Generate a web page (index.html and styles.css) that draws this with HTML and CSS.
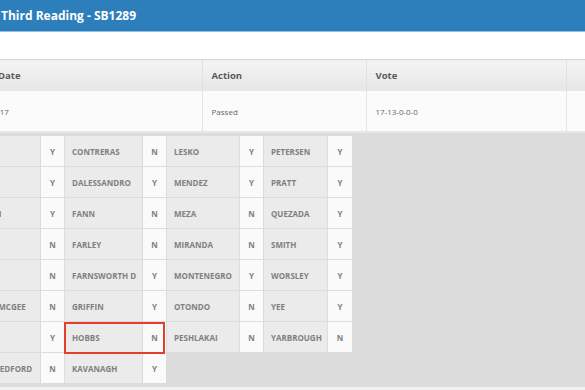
FILE: index.html
```html
<!DOCTYPE html>
<html lang="en">

<head>
    <meta charset="UTF-8">
    <meta name="viewport" content="width=device-width, initial-scale=1.0">
    <title>SB1289 - Third Reading</title>
    <link rel="stylesheet" href="styles.css">
</head>

<body>
    <div class="page">
        <div class="title-bar">
            <h2>Third Reading - SB1289</h2>
        </div>

        <div class="content">
            <table class="actions">
                <colgroup>
                    <col class="col-date">
                    <col class="col-action">
                    <col class="col-vote">
                    <col class="col-extra">
                </colgroup>
                <thead>
                    <tr>
                        <th class="date-head">Date</th>
                        <th>Action</th>
                        <th>Vote</th>
                        <th></th>
                    </tr>
                </thead>
                <tbody>
                    <tr class="record">
                        <td>3/27/2017</td>
                        <td>Passed</td>
                        <td>17-13-0-0-0</td>
                        <td></td>
                    </tr>
                    <tr>
                        <td colspan="4" class="roll-cell">
                            <div class="roll">
                                <div class="name">ALLEN S</div><div class="v">Y</div>
                                <div class="name">CONTRERAS</div><div class="v">N</div>
                                <div class="name">LESKO</div><div class="v">Y</div>
                                <div class="name">PETERSEN</div><div class="v">Y</div>

                                <div class="name">BARTO</div><div class="v">Y</div>
                                <div class="name">DALESSANDRO</div><div class="v">Y</div>
                                <div class="name">MENDEZ</div><div class="v">Y</div>
                                <div class="name">PRATT</div><div class="v">Y</div>

                                <div class="name">BORRELLI</div><div class="v">Y</div>
                                <div class="name">FANN</div><div class="v">N</div>
                                <div class="name">MEZA</div><div class="v">N</div>
                                <div class="name">QUEZADA</div><div class="v">Y</div>

                                <div class="name">BOWIE</div><div class="v">N</div>
                                <div class="name">FARLEY</div><div class="v">N</div>
                                <div class="name">MIRANDA</div><div class="v">N</div>
                                <div class="name">SMITH</div><div class="v">Y</div>

                                <div class="name">BRADLEY</div><div class="v">N</div>
                                <div class="name">FARNSWORTH D</div><div class="v">Y</div>
                                <div class="name">MONTENEGRO</div><div class="v">Y</div>
                                <div class="name">WORSLEY</div><div class="v">Y</div>

                                <div class="name">BROPHY MCGEE</div><div class="v">N</div>
                                <div class="name">GRIFFIN</div><div class="v">Y</div>
                                <div class="name">OTONDO</div><div class="v">N</div>
                                <div class="name">YEE</div><div class="v">Y</div>

                                <div class="name">BURGES</div><div class="v">Y</div>
                                <div class="name">HOBBS</div><div class="v">N</div>
                                <div class="name">PESHLAKAI</div><div class="v">N</div>
                                <div class="name">YARBROUGH</div><div class="v">N</div>

                                <div class="name">CAJERO BEDFORD</div><div class="v">N</div>
                                <div class="name">KAVANAGH</div><div class="v">Y</div>

                                <!-- highlighted member -->
                                <div class="marker"></div>
                            </div>
                        </td>
                    </tr>
                </tbody>
            </table>
        </div>
    </div>
</body>

</html>
```

FILE: styles.css
```css
html {
    background-color: #f0f0f0;
    font-family: "Open Sans", Arial, sans-serif;
}

body {
    margin: 0;
    height: 390px;
    overflow: hidden;
}

.page {
    margin-left: -44px;
    width: 764px;
}

.title-bar {
    background-color: #2c7fba;
    border-bottom: 1px solid #8fc2e6;
    height: 31px;
    display: flex;
    align-items: center;
}

.title-bar h2 {
    margin: 0 0 1px 45px;
    color: white;
    font-size: 12px;
    font-weight: bold;
}

.content {
    background-color: white;
    padding-top: 27px;
}

.actions {
    border-collapse: collapse;
    table-layout: fixed;
    width: 764px;
}

.col-date {
    width: 246px;
}

.col-action {
    width: 164px;
}

.col-vote {
    width: 200px;
}

.actions th {
    height: 31px;
    padding: 0 0 0 9px;
    text-align: left;
    font-size: 9.5px;
    font-weight: bold;
    color: #5a5a5a;
    background: linear-gradient(#f4f4f4, #e6e6e6);
    border-top: 1px solid #d9d9d9;
    border-left: 1px solid #e0e0e0;
}

.actions th.date-head {
    padding-left: 42px;
    border-left: none;
}

.record td {
    height: 40px;
    padding: 0 0 0 9px;
    font-size: 8px;
    color: #666;
    background-color: #fbfbfb;
    border-left: 1px solid #e4e4e4;
    border-bottom: 2px solid #e8e8e8;
}

.record td:first-child {
    padding-left: 15px;
    border-left: none;
}

.roll-cell {
    background-color: #dcdcdc;
    padding: 3px 0 4px 0;
}

.roll {
    position: relative;
    display: grid;
    grid-template-columns: 84px 23px 77px 23px 72px 23px 63px 24px;
    grid-auto-rows: 30px;
    gap: 1px;
    width: max-content;
}

.roll .name,
.roll .v {
    display: flex;
    align-items: center;
    font-size: 8px;
    font-weight: bold;
    color: #808080;
    white-space: nowrap;
}

.roll .name {
    background-color: #ebebeb;
    padding-left: 7px;
}

.roll .v {
    background-color: #fafafa;
    justify-content: center;
}

.marker {
    position: absolute;
    left: 108px;
    top: 186px;
    width: 97px;
    height: 28px;
    border: 2px solid #e2402b;
}
```
